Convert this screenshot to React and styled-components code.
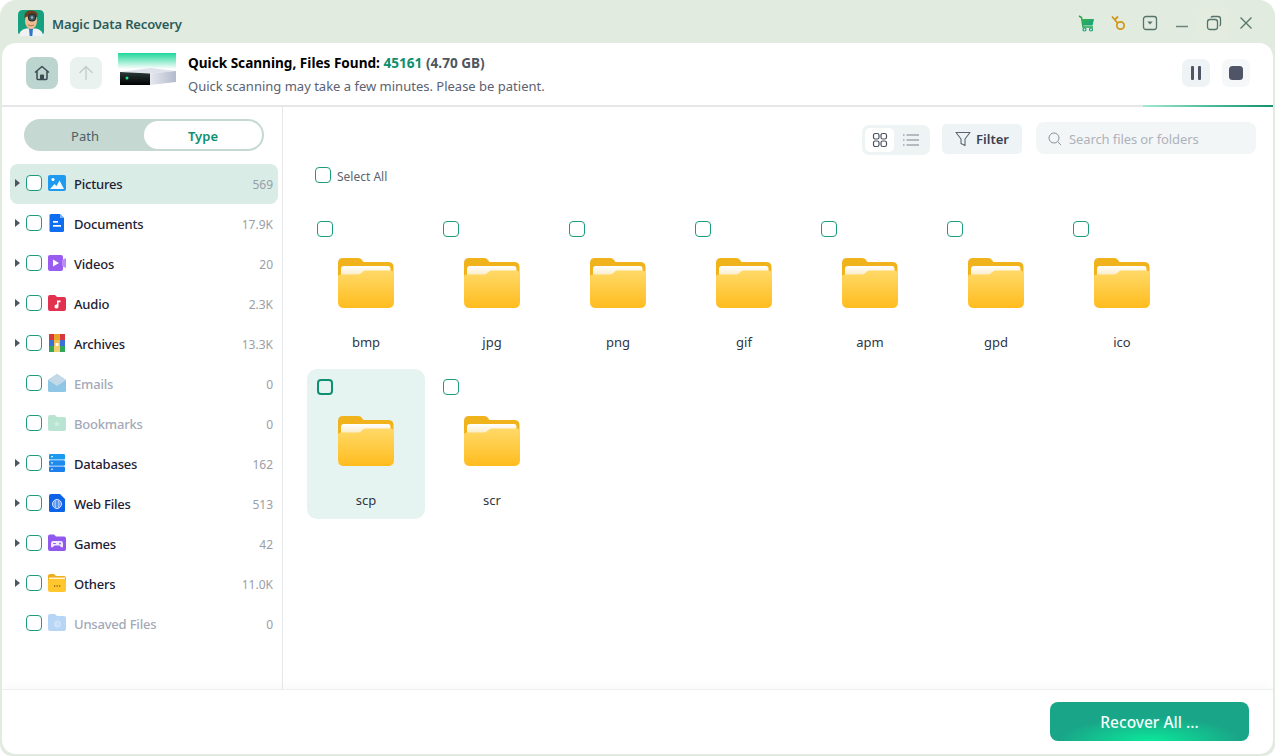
import React from 'react';
import styled, { createGlobalStyle } from 'styled-components';

const Global = createGlobalStyle`
  html, body { margin: 0; padding: 0; background: #fff; height: 100%; overflow: hidden; }
  body { font-family: "Noto Sans", "Open Sans", sans-serif; }
  * { box-sizing: border-box; }
`;

const Window = styled.div`
  width: 1275px; height: 756px; display: flex; flex-direction: column;
  background: #e2ebdf; border-radius: 16px 16px 12px 12px; overflow: hidden;
`;
const TitleBar = styled.header`
  height: 43px; flex: none; display: flex; align-items: center; padding: 3px 13px 0 18px;
`;
const Logo = styled.svg` width: 26px; height: 27px; flex: none; `;
const AppName = styled.div`
  margin-left: 8px; font-size: 13px; font-weight: 600; color: #2c5c5a; flex: 1; letter-spacing: -0.15px; padding-top: 1px;
`;
const TitleButton = styled.button`
  width: 32px; height: 32px; padding: 0; border: 0; display: flex;
  align-items: center; justify-content: center; border-radius: 6px;
  background: ${p => (p.$hover ? '#e3ecdf' : 'transparent')};
`;
const Panel = styled.main`
  flex: 1; min-height: 0; margin: 0 2px 2px; background: #fff; border-radius: 14px;
  display: flex; flex-direction: column; overflow: hidden;
`;
const ScanHeader = styled.section`
  position: relative; height: 64px; flex: none; display: flex; align-items: center;
  padding: 0 23px 2px 24px; border-bottom: 2px solid #e4e6e8;
  &::after {
    content: ''; position: absolute; right: 0; bottom: -2px; width: 130px; height: 2px;
    background: linear-gradient(90deg, #a4e8cf, #4fbb9a 50%, #12906f);
  }
`;
const NavButton = styled.button`
  width: 32px; height: 32px; padding: 0; border: 0; border-radius: 8px; display: flex;
  align-items: center; justify-content: center; margin-right: 12px;
  background: ${p => (p.$active ? '#bcd5cf' : '#eaf2ef')};
`;
const Drive = styled.svg` width: 58px; height: 34px; margin: -7px 12px 0 4px; flex: none; `;
const ScanInfo = styled.div` flex: 1; display: flex; flex-direction: column; gap: 5px; margin-top: 3px; `;
const ScanTitle = styled.div` font-size: 13.6px; font-weight: 700; color: #000; line-height: 18px; `;
const Green = styled.span` color: #0c8f6e; `;
const Grey = styled.span` color: #4f5561; `;
const ScanSub = styled.div` font-size: 13px; color: #5b6272; line-height: 18px; `;
const ScanButton = styled.button`
  width: 28px; height: 28px; padding: 0; border: 0; border-radius: 7px; margin-left: 12px;
  display: flex; align-items: center; justify-content: center;
  background: ${p => (p.$light ? '#f5f7f8' : '#eef3f6')};
`;
const Body = styled.div` flex: 1; min-height: 0; display: flex; `;
const Sidebar = styled.aside`
  width: 281px; flex: none; border-right: 1px solid #e6e8e9; padding: 12px 4px 0 8px;
`;
const Tabs = styled.div`
  width: 240px; height: 32px; margin-left: 14px; background: #c5d8d2; border-radius: 16px;
  display: flex; padding: 2px; margin-bottom: 13px;
`;
const Tab = styled.div`
  flex: 1; display: flex; align-items: center; justify-content: center; font-size: 13px;
  border-radius: 14px; padding-top: 2px;
  background: ${p => (p.$on ? '#fff' : 'transparent')};
  color: ${p => (p.$on ? '#0e8f72' : '#4d5f68')};
  font-weight: ${p => (p.$on ? 600 : 400)};
`;
const Row = styled.div`
  height: 40px; width: 268px; display: flex; align-items: center; border-radius: 8px; padding-right: 5px;
  background: ${p => (p.$sel ? '#d9ece6' : 'transparent')};
`;
const Caret = styled.span`
  width: 0; height: 0; margin: -3px 0 0 5px; border-left: 5px solid ${p => (p.$hide ? 'transparent' : '#4d5560')};
  border-top: 4px solid transparent; border-bottom: 4px solid transparent; flex: none;
`;
const Check = styled.span`
  display: block; flex: none; width: 16px; height: 16px; border-radius: 4px; background: #fff;
  border: ${p => (p.$strong ? '2.5px solid #0f8f72' : '1.5px solid #1c9c7d')};
`;
const RowCheck = styled(Check)` margin: -3px 6px 0 6px; `;
const RowIcon = styled.svg` width: 18px; height: 18px; flex: none; margin-top: -2px; `;
const RowLabel = styled.span`
  margin-left: 8px; flex: 1; font-size: 13px; font-weight: 500; letter-spacing: -0.2px;
  color: ${p => (p.$off ? '#a4a9b8' : '#1d2133')};
`;
const Count = styled.span` font-size: 12px; color: #9a9ea6; `;
const Content = styled.section` flex: 1; min-width: 0; display: flex; flex-direction: column; `;
const Toolbar = styled.div`
  display: flex; justify-content: flex-end; align-items: flex-start; padding: 15px 17px 0 0; height: 47px;
`;
const ViewToggle = styled.div`
  width: 68px; height: 30px; margin-top: 3px; margin-right: 12px; background: #eef3f4; border-radius: 7px;
  padding: 3px; display: flex;
`;
const ViewCell = styled.span`
  width: 31px; height: 24px; border-radius: 5px; display: flex; align-items: center; justify-content: center;
  background: ${p => (p.$on ? '#fff' : 'transparent')}; margin-right: 2px;
`;
const FilterButton = styled.button`
  width: 80px; height: 30px; margin-top: 2px; margin-right: 14px; border: 0; border-radius: 5px; background: #eef3f5;
  display: flex; align-items: center; justify-content: center; gap: 5px; padding: 0;
  font: 600 13px "Noto Sans", sans-serif; color: #3a4150;
`;
const Search = styled.div`
  width: 220px; height: 32px; border-radius: 8px; background: #f3f6f6; display: flex; align-items: center;
  padding: 2px 0 0 12px; gap: 7px; font-size: 13px; color: #aeb2bc; letter-spacing: -0.1px;
`;
const SelectAll = styled.label`
  display: flex; align-items: center; gap: 6px; margin: 14px 0 27px 32px; height: 16px;
  font-size: 12px; color: #5d6470;
`;
const SelectAllCheck = styled(Check)` margin-top: -2px; `;
const Grid = styled.div`
  display: grid; grid-template-columns: repeat(7, 118px); grid-auto-rows: 150px; gap: 8px; padding-left: 24px;
`;
const Tile = styled.div`
  padding: 10px; border-radius: 10px; display: flex; flex-direction: column; align-items: center;
  background: ${p => (p.$sel ? '#e6f4f1' : 'transparent')};
`;
const TileCheck = styled(Check)` align-self: flex-start; background: transparent; `;
const Folder = styled.svg` width: 56px; height: 50px; margin-top: 21px; flex: none; `;
const TileName = styled.div` margin-top: 25px; font-size: 13px; line-height: 18px; color: #303644; `;
const Footer = styled.footer`
  height: 65px; flex: none; border-top: 1px solid #eceeef; display: flex; justify-content: flex-end;
  align-items: flex-start; padding: 12px 24px 0 0; box-shadow: 0 -6px 10px rgba(0, 0, 0, 0.018);
`;
const Recover = styled.button`
  width: 199px; height: 39px; border: 0; border-radius: 8px; color: #f2fffb;
  font: 500 15.5px "Noto Sans", sans-serif; padding: 0;
  background: radial-gradient(ellipse 90px 24px at 50% 100%, #0be89a 0%, rgba(11, 232, 154, 0) 100%), #19a688;
`;

const FolderGlyph = ({ id }) => (
  <Folder viewBox="0 0 56 50">
    <defs>
      <linearGradient id={id} x1="0" y1="0" x2="0" y2="1">
        <stop offset="0" stopColor="#ffd968" />
        <stop offset="1" stopColor="#ffbc1e" />
      </linearGradient>
      <linearGradient id={id + 'p'} x1="0" y1="0" x2="0" y2="1">
        <stop offset="0" stopColor="#ffffff" />
        <stop offset="1" stopColor="#f8e6b4" />
      </linearGradient>
    </defs>
    <path d="M0 5Q0 0 5 0H20Q23 0 24 2L25.500 4H50Q55.500 4 55.500 9V30H0Z" fill="#f0b31c" />
    <path d="M3 11Q3 8 6 8H50Q52.500 8 52.500 11V20H3Z" fill={`url(#${id}p)`} />
    <path d="M0 19Q0 16.500 3 16.500H20Q22 16.500 24 14.500Q25 12.500 28 12.500H52Q56 12.500 56 16V44Q56 50 50 50H6Q0 50 0 44Z" fill={`url(#${id})`} />
  </Folder>
);

const I = {
  Pictures: (
    <RowIcon viewBox="0 0 18 18">
      <rect y="1" width="18" height="16" rx="2" fill="#1e9bf0" />
      <circle cx="5" cy="5.500" r="1.500" fill="#fff" />
      <path d="M2 15l4.500-5 2 2 3-5.500L16 15z" fill="#fff" opacity=".95" />
    </RowIcon>
  ),
  Documents: (
    <RowIcon viewBox="0 0 18 18">
      <path d="M3 0H12L16 4V16.500Q16 18 14.500 18H3Q1.500 18 1.500 16.500V1.500Q1.500 0 3 0Z" fill="#0f6ef0" />
      <path d="M12 0L16 4H12Z" fill="#7db5fb" />
      <rect x="5" y="7" width="5" height="1.700" fill="#fff" />
      <rect x="5" y="11" width="8" height="1.700" fill="#fff" />
    </RowIcon>
  ),
  Videos: (
    <RowIcon viewBox="0 0 18 18">
      <rect y="1" width="15" height="16" rx="2" fill="#9a5cf0" />
      <path d="M14 6l4-2v10l-4-2z" fill="#b98cf6" />
      <path d="M5 5.500l6 3.500-6 3.500z" fill="#fff" />
    </RowIcon>
  ),
  Audio: (
    <RowIcon viewBox="0 0 18 18">
      <path d="M0 3Q0 1 2 1H7L9 3H16Q18 3 18 5V15Q18 17 16 17H2Q0 17 0 15Z" fill="#e2304f" />
      <path d="M9 6.500h3.500v1.800H10.500V12.500A2 2 0 1 1 9 10.600Z" fill="#fff" />
    </RowIcon>
  ),
  Archives: (
    <RowIcon viewBox="0 0 18 18">
      <rect x="1" y="0" width="5" height="6" fill="#d8383c" /><rect x="6" y="0" width="6" height="6" fill="#e9a22c" /><rect x="12" y="0" width="5" height="6" fill="#d8383c" />
      <rect x="1" y="6" width="5" height="6" fill="#3c6fd8" /><rect x="6" y="6" width="6" height="6" fill="#f2bd46" /><rect x="12" y="6" width="5" height="6" fill="#3c6fd8" />
      <rect x="1" y="12" width="5" height="6" fill="#2fa85a" /><rect x="6" y="12" width="6" height="6" fill="#f4cd6c" /><rect x="12" y="12" width="5" height="6" fill="#2fa85a" />
      <rect x="7.500" y="9" width="3" height="3" fill="#fff" />
    </RowIcon>
  ),
  Emails: (
    <RowIcon viewBox="0 0 18 18">
      <path d="M0 6L9 0l9 6v10.500Q18 18 16.500 18H1.500Q0 18 0 16.500Z" fill="#8fc6e6" />
      <path d="M0 6L9 12l9-6-9-6z" fill="#c3d9e8" />
    </RowIcon>
  ),
  Bookmarks: (
    <RowIcon viewBox="0 0 18 18">
      <path d="M0 3Q0 1 2 1H7L9 3H16Q18 3 18 5V15Q18 17 16 17H2Q0 17 0 15Z" fill="#b9e4d1" />
      <path d="M9 7l1 2 2 .3-1.500 1.500.4 2-1.900-1-1.900 1 .4-2L6 9.300 8 9z" fill="#cdeee0" />
    </RowIcon>
  ),
  Databases: (
    <RowIcon viewBox="0 0 18 18">
      <rect x="1" y="0" width="16" height="5.500" rx="1.200" fill="#1b9af0" />
      <rect x="1" y="6.200" width="16" height="5.500" rx="1.200" fill="#1e8cee" />
      <rect x="1" y="12.400" width="16" height="5.600" rx="1.200" fill="#1b7fec" />
      <rect x="3" y="2.200" width="2" height="1" fill="#fff" /><rect x="3" y="8.400" width="2" height="1" fill="#fff" /><rect x="3" y="14.700" width="2" height="1" fill="#fff" />
    </RowIcon>
  ),
  WebFiles: (
    <RowIcon viewBox="0 0 18 18">
      <path d="M3 0H12L17 5V16.500Q17 18 15.500 18H2.500Q1 18 1 16.500V2Q1 0 3 0Z" fill="#0e63e6" />
      <circle cx="9" cy="10" r="4.500" fill="none" stroke="#dbe9ff" strokeWidth="1" />
      <ellipse cx="9" cy="10" rx="2" ry="4.500" fill="none" stroke="#dbe9ff" strokeWidth=".8" />
      <path d="M4.500 10h9M5 8h8M5 12h8" stroke="#dbe9ff" strokeWidth=".7" />
    </RowIcon>
  ),
  Games: (
    <RowIcon viewBox="0 0 18 18">
      <path d="M0 2.500Q0 .5 2 .5H6L8 2.500H16Q18 2.500 18 4.500V15Q18 17 16 17H2Q0 17 0 15Z" fill="#9158ee" />
      <path d="M5 7H13Q15 7 15 10L15 12.500Q14.500 14 13 13L11.500 11.500H6.500L5 13Q3.500 14 3 12.500V10Q3 7 5 7Z" fill="#f2eaff" />
      <circle cx="12" cy="9.500" r=".9" fill="#9158ee" /><rect x="5.200" y="9" width="2.600" height="1" fill="#9158ee" />
    </RowIcon>
  ),
  Others: (
    <RowIcon viewBox="0 0 18 18">
      <path d="M0 2Q0 0 2 0H6L8 2H16Q18 2 18 4V10H0Z" fill="#eeaf1c" />
      <rect x="1" y="3.500" width="16" height="3" fill="#fff4d6" />
      <path d="M0 6.500Q0 5 2 5H16Q18 5 18 7V16Q18 18 16 18H2Q0 18 0 16Z" fill="#ffc62e" />
      <path d="M6 12h1.200M8.500 12h1.200M11 12h1.200" stroke="#8a6212" strokeWidth="1.300" />
    </RowIcon>
  ),
  Unsaved: (
    <RowIcon viewBox="0 0 18 18">
      <path d="M0 2Q0 0 2 0H7L9 2H16Q18 2 18 4V15Q18 17 16 17H2Q0 17 0 15Z" fill="#b7d6f5" />
      <circle cx="9.500" cy="10" r="3.500" fill="#cfe3f8" />
      <path d="M9.500 8v2.300h2" stroke="#b7d6f5" strokeWidth=".8" fill="none" />
    </RowIcon>
  ),
};

const rows = [
  ['Pictures', 'Pictures', '569', 1, 0, 1],
  ['Documents', 'Documents', '17.9K', 1],
  ['Videos', 'Videos', '20', 1],
  ['Audio', 'Audio', '2.3K', 1],
  ['Archives', 'Archives', '13.3K', 1],
  ['Emails', 'Emails', '0', 0, 1],
  ['Bookmarks', 'Bookmarks', '0', 0, 1],
  ['Databases', 'Databases', '162', 1],
  ['Web Files', 'WebFiles', '513', 1],
  ['Games', 'Games', '42', 1],
  ['Others', 'Others', '11.0K', 1],
  ['Unsaved Files', 'Unsaved', '0', 0, 1],
];
const files = ['bmp', 'jpg', 'png', 'gif', 'apm', 'gpd', 'ico', 'scp', 'scr'];

export default function App() {
  return (
    <Window>
      <Global />
      <TitleBar>
        <Logo viewBox="0 0 26 27">
          <path d="M5 0H21Q26 0 26 5V22Q26 25 21 25H5Q0 25 0 22V5Q0 0 5 0Z" fill="#15a07e" />
          <path d="M1 26Q1 20 8 18.500H18Q25 20 25 26Z" fill="#eef2f4" />
          <path d="M11 18.500H15L14.300 26H11.700Z" fill="#2f76c4" />
          <ellipse cx="13" cy="11" rx="6" ry="8" fill="#f0bc92" />
          <path d="M6.500 9Q5 0.500 13 0.500Q20.500 0.500 19.500 7Q15 6.500 13 4.500Q11 7 7.500 7Z" fill="#6a4020" />
          <circle cx="14" cy="7.500" r="3.500" fill="#3e5560" stroke="#1f2a2e" strokeWidth="1.200" />
          <circle cx="14" cy="7.500" r="1.200" fill="#9fb4ba" />
          <path d="M10 15Q13 16.500 16 15" stroke="#a8683c" strokeWidth=".8" fill="none" />
        </Logo>
        <AppName>Magic Data Recovery</AppName>
        <TitleButton>
          <svg width="17" height="17" viewBox="0 0 17 17">
            <defs><linearGradient id="cart" x1="0" y1="0" x2="1" y2="1"><stop offset="0" stopColor="#38b24b" /><stop offset="1" stopColor="#10a088" /></linearGradient></defs>
            <path d="M1 1L3.500 2.500L5 12H15" fill="none" stroke="#2aa94e" strokeWidth="1.500" />
            <path d="M4 4H16L14.500 10.500H5Z" fill="url(#cart)" />
            <circle cx="6.500" cy="14.500" r="1.500" fill="none" stroke="#14a078" strokeWidth="1.200" />
            <circle cx="13" cy="14.500" r="1.500" fill="none" stroke="#14a078" strokeWidth="1.200" />
          </svg>
        </TitleButton>
        <TitleButton>
          <svg width="16" height="16" viewBox="0 0 16 16" fill="none" stroke="#d0981c" strokeWidth="1.800">
            <circle cx="10.500" cy="10.500" r="3.700" />
            <path d="M7.500 8L2 1.500M5 4.500L8 1.500" />
          </svg>
        </TitleButton>
        <TitleButton>
          <svg width="16" height="16" viewBox="0 0 16 16" fill="none">
            <rect x="1.500" y="1.500" width="13" height="13" rx="2.500" stroke="#56736c" strokeWidth="1.300" />
            <path d="M5.300 6.500H10.700L8 9.500Z" fill="#56736c" />
          </svg>
        </TitleButton>
        <TitleButton>
          <svg width="14" height="14" viewBox="0 0 14 14"><path d="M1 10.500H13" stroke="#6c857f" strokeWidth="1.400" /></svg>
        </TitleButton>
        <TitleButton $hover>
          <svg width="16" height="16" viewBox="0 0 16 16" fill="none" stroke="#56736c" strokeWidth="1.300">
            <rect x="1.500" y="4.500" width="10" height="10" rx="2.500" />
            <path d="M5 2.500Q5.500 1.500 7 1.500H12Q14.500 1.500 14.500 4V9Q14.500 10.500 13.500 11" />
          </svg>
        </TitleButton>
        <TitleButton>
          <svg width="14" height="14" viewBox="0 0 14 14" stroke="#56736c" strokeWidth="1.300"><path d="M1.500 1.500L12.500 12.500M12.500 1.500L1.500 12.500" /></svg>
        </TitleButton>
      </TitleBar>
      <Panel>
        <ScanHeader>
          <NavButton $active>
            <svg width="18" height="18" viewBox="0 0 18 18" fill="none">
              <path d="M2 8.500L9 2.500L16 8.500M4 7V14.500Q4 15.500 5 15.500H13Q14 15.500 14 14.500V7" stroke="#3d4a52" strokeWidth="1.500" strokeLinejoin="round" />
              <rect x="7" y="10.500" width="4" height="5" rx="1" fill="#3d4a52" />
            </svg>
          </NavButton>
          <NavButton>
            <svg width="18" height="18" viewBox="0 0 18 18" fill="none" stroke="#c3cdca" strokeWidth="1.400"><path d="M9 16V2.500M2.500 9L9 2.500L15.500 9" /></svg>
          </NavButton>
          <Drive viewBox="0 0 58 34">
            <defs>
              <linearGradient id="glow" x1="0" y1="0" x2="0" y2="1"><stop offset="0" stopColor="#1fd79a" /><stop offset="1" stopColor="#ffffff" /></linearGradient>
              <linearGradient id="side" x1="0" y1="0" x2="1" y2="0"><stop offset="0" stopColor="#e6e8ef" /><stop offset="1" stopColor="#b2bacb" /></linearGradient>
              <linearGradient id="front" x1="0" y1="0" x2="0" y2="1"><stop offset="0" stopColor="#2c3a3a" /><stop offset="1" stopColor="#000" /></linearGradient>
            </defs>
            <rect width="58" height="16" fill="url(#glow)" />
            <path d="M2 19L32 15L58 18L32 20.500Z" fill="#dfe2ea" />
            <path d="M2 19L32 20.500V32H2Z" fill="url(#front)" />
            <path d="M32 20.500L58 18V29L32 32Z" fill="url(#side)" />
            <circle cx="9" cy="25" r="1.500" fill="#24e58a" />
          </Drive>
          <ScanInfo>
            <ScanTitle>Quick Scanning, Files Found: <Green>45161</Green> <Grey>(4.70 GB)</Grey></ScanTitle>
            <ScanSub>Quick scanning may take a few minutes. Please be patient.</ScanSub>
          </ScanInfo>
          <ScanButton>
            <svg width="14" height="14" viewBox="0 0 14 14" fill="#4f5566"><rect x="2" y="0" width="3" height="14" rx="1" /><rect x="9" y="0" width="3" height="14" rx="1" /></svg>
          </ScanButton>
          <ScanButton $light>
            <svg width="14" height="14" viewBox="0 0 14 14"><rect width="14" height="14" rx="3.500" fill="#4f5566" /></svg>
          </ScanButton>
        </ScanHeader>
        <Body>
          <Sidebar>
            <Tabs>
              <Tab>Path</Tab>
              <Tab $on>Type</Tab>
            </Tabs>
            {rows.map(([label, icon, count, caret, off, sel]) => (
              <Row key={label} $sel={sel}>
                <Caret $hide={!caret} />
                <RowCheck />
                {I[icon]}
                <RowLabel $off={off}>{label}</RowLabel>
                <Count>{count}</Count>
              </Row>
            ))}
          </Sidebar>
          <Content>
            <Toolbar>
              <ViewToggle>
                <ViewCell $on>
                  <svg width="16" height="16" viewBox="0 0 16 16" fill="none" stroke="#4a5160" strokeWidth="1.200">
                    <rect x="1.500" y="1.500" width="5.500" height="5.500" rx="1.800" /><rect x="9" y="1.500" width="5.500" height="5.500" rx="1.800" />
                    <rect x="1.500" y="9" width="5.500" height="5.500" rx="1.800" /><rect x="9" y="9" width="5.500" height="5.500" rx="1.800" />
                  </svg>
                </ViewCell>
                <ViewCell>
                  <svg width="18" height="14" viewBox="0 0 18 14" stroke="#7c828e" strokeWidth="1.200">
                    <path d="M4.500 2H17M4.500 7H17M4.500 12H17M1 2H2.500M1 7H2.500M1 12H2.500" />
                  </svg>
                </ViewCell>
              </ViewToggle>
              <FilterButton>
                <svg width="16" height="16" viewBox="0 0 16 16" fill="none" stroke="#5b6472" strokeWidth="1.100" strokeLinejoin="round">
                  <path d="M1 1.500H15L10 8V14.500L6 12.500V8Z" />
                </svg>
                Filter
              </FilterButton>
              <Search>
                <svg width="14" height="14" viewBox="0 0 14 14" fill="none" stroke="#8b909a" strokeWidth="1"><circle cx="6" cy="6" r="5" /><path d="M9.700 9.700L13 13" /></svg>
                Search files or folders
              </Search>
            </Toolbar>
            <SelectAll><SelectAllCheck />Select All</SelectAll>
            <Grid>
              {files.map(f => (
                <Tile key={f} $sel={f === 'scp'}>
                  <TileCheck $strong={f === 'scp'} />
                  <FolderGlyph id={`folder-${f}`} />
                  <TileName>{f}</TileName>
                </Tile>
              ))}
            </Grid>
          </Content>
        </Body>
        <Footer>
          <Recover>Recover All ...</Recover>
        </Footer>
      </Panel>
    </Window>
  );
}
